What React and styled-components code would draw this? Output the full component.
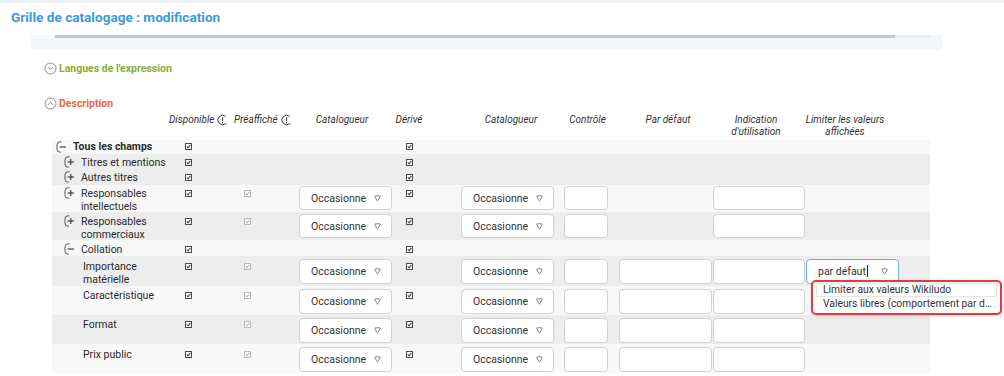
import styled, { createGlobalStyle } from "styled-components";

const GlobalStyle = createGlobalStyle`
  body {
    margin: 0;
    background: #fff;
    font-family: Roboto, "Liberation Sans", sans-serif;
    color: #333;
    overflow: hidden;
  }
`;

// grille de colonnes partagée par l'entête et les lignes
const COLUMNS = "116px 62px 66px 100px 26px 139px 53px 98px 94px 96px 28px";

const TopBand = styled.div`
  height: 3px;
  background: #f0f3f6;
`;

const Title = styled.h1`
  margin: 0;
  height: 32px;
  box-sizing: border-box;
  padding: 7px 11px 0;
  font-size: 13.6px;
  line-height: 14px;
  font-weight: 700;
  color: #3d9ad9;
`;

const Panel = styled.div`
  margin-left: 31px;
  width: 911px;
`;

const ScrollStrip = styled.div`
  height: 15px;
  background: #f4f7fa;
  display: flex;
  align-items: flex-start;
  padding-left: 24px;
`;

const Thumb = styled.div`
  width: 840px;
  height: 3px;
  background: #c6c6c6;
`;

const Track = styled.div`
  width: 35px;
  height: 3px;
  background: #ececec;
`;

const Section = styled.div`
  display: flex;
  align-items: center;
  gap: 2px;
  height: 16px;
  margin-top: ${(p) => p.$mt}px;
  padding-left: 13px;
  font-size: 10.5px;
  font-weight: 700;
  color: ${(p) => p.$color};
`;

const Table = styled.div`
  margin-top: 2px;
  margin-left: 21px;
  width: 878px;
`;

const HeaderRow = styled.div`
  display: grid;
  grid-template-columns: ${COLUMNS};
  height: 27px;
  box-sizing: border-box;
  padding-top: 1px;
  font-size: 10px;
  font-style: italic;
  line-height: 12px;
  color: #333;
`;

const Head = styled.div`
  display: flex;
  justify-content: ${(p) => p.$justify || "center"};
  align-items: flex-start;
  text-align: center;
  white-space: nowrap;
  gap: 3px;
  padding-left: ${(p) => p.$pl || 0}px;
  padding-right: ${(p) => p.$pr || 0}px;
`;

const Row = styled.div`
  display: grid;
  grid-template-columns: ${COLUMNS};
  align-items: start;
  height: ${(p) => p.$h}px;
  background: ${(p) => (p.$dark ? "#ededed" : "#f8f8f8")};
  font-size: 10.5px;
  line-height: 13px;
`;

const Label = styled.div`
  display: flex;
  align-items: flex-start;
  gap: 6px;
  padding-left: ${(p) => p.$indent}px;
  padding-top: ${(p) => p.$pt}px;
  font-weight: ${(p) => (p.$bold ? 700 : 400)};
  color: #2b2b2b;
`;

const IconSlot = styled.span`
  display: flex;
  height: 13px;
  align-items: center;
  flex: none;
`;

const CheckCell = styled.div`
  display: flex;
  justify-content: ${(p) => (p.$center ? "center" : "flex-start")};
  padding-left: ${(p) => p.$pl || 0}px;
  padding-top: ${(p) => p.$pt}px;
  height: 13px;
  align-items: center;
`;

const FieldCell = styled.div`
  position: relative;
  padding-left: ${(p) => p.$pl || 0}px;
  padding-top: ${(p) => p.$pt}px;
`;

const SelectBox = styled.div`
  display: flex;
  align-items: center;
  justify-content: space-between;
  width: 93px;
  height: ${(p) => p.$h}px;
  box-sizing: border-box;
  padding: 0 10px 0 11px;
  background: #fff;
  border: 1px solid ${(p) => (p.$focus ? "#6aaee6" : "#d2d2d2")};
  border-radius: 4px;
  font-size: 10.5px;
  color: #333;
`;

const Caret = styled.span`
  display: inline-block;
  width: 1px;
  height: 12px;
  margin-left: 1px;
  vertical-align: -2px;
  background: #222;
`;

const Input = styled.div`
  width: ${(p) => p.$w}px;
  height: ${(p) => p.$h}px;
  box-sizing: border-box;
  background: #fff;
  border: 1px solid #d2d2d2;
  border-radius: 4px;
`;

const Menu = styled.div`
  position: absolute;
  top: ${(p) => p.$top}px;
  left: 5px;
  width: 191px;
  box-sizing: border-box;
  padding: 1px 3px 2px;
  background: #fff;
  border: 2px solid #e13a3f;
  border-radius: 5px;
  box-shadow: 0 1px 3px rgba(0, 0, 0, 0.15);
  z-index: 2;
`;

const MenuItem = styled.div`
  height: 14px;
  line-height: 12px;
  box-sizing: border-box;
  padding-left: 6px;
  font-size: 10.3px;
  color: #333;
  white-space: nowrap;
  overflow: hidden;
  text-overflow: ellipsis;
  border: 1px solid ${(p) => (p.$active ? "#e6e6e6" : "transparent")};
`;

function CircleChevron({ up }) {
  return (
    <svg width="13" height="13" viewBox="0 0 13 13">
      <circle cx="6.5" cy="6.5" r="5.5" fill="none" stroke="#8c8c8c" strokeWidth="1" />
      <path
        d={up ? "M4.3 7.6 L6.5 5.4 L8.7 7.6" : "M4.3 5.4 L6.5 7.6 L8.7 5.4"}
        fill="none"
        stroke="#8c8c8c"
        strokeWidth="1"
        strokeLinecap="round"
      />
    </svg>
  );
}

function TreeIcon({ open }) {
  return (
    <svg width="11" height="12" viewBox="0 0 11 12">
      <path
        d="M5.5 0.8 H4 A3 3 0 0 0 1 3.8 V8.2 A3 3 0 0 0 4 11.2 H4.8"
        fill="none"
        stroke="#555"
        strokeWidth="1"
      />
      <path d="M3.6 6 H10" stroke="#333" strokeWidth="1.1" />
      {!open && <path d="M6.8 3 V9" stroke="#333" strokeWidth="1.1" />}
    </svg>
  );
}

function InfoIcon() {
  return (
    <svg width="11" height="12" viewBox="0 0 11 12">
      <path
        d="M8.6 2.2 A4.8 4.8 0 1 0 8.6 9.8"
        fill="none"
        stroke="#444"
        strokeWidth="1"
      />
      <path d="M5.5 3.4 V7" stroke="#444" strokeWidth="1.2" />
      <circle cx="5.5" cy="8.8" r="0.7" fill="#444" />
      <path d="M9.6 9.6 L10 10.6" stroke="#444" strokeWidth="0.8" />
    </svg>
  );
}

function Check({ disabled }) {
  const c = disabled ? "#b9b9b9" : "#4a4a4a";
  return (
    <svg width="7" height="7" viewBox="0 0 7 7">
      <rect x="0.5" y="0.5" width="6" height="6" fill="#fff" stroke={c} strokeWidth="1" />
      <path d="M1.8 3.3 L3.1 4.8 L5.4 1.8" fill="none" stroke={c} strokeWidth="1.1" />
    </svg>
  );
}

function Chevron() {
  return (
    <svg width="7" height="7" viewBox="0 0 7 7">
      <path
        d="M1.3 0.8 H5.7 Q6.6 0.8 6.1 1.8 L4 5.6 Q3.5 6.4 3 5.6 L0.9 1.8 Q0.4 0.8 1.3 0.8 Z"
        fill="none"
        stroke="#777"
        strokeWidth="0.9"
      />
    </svg>
  );
}

function Select({ h, focus, children }) {
  return (
    <SelectBox $h={h} $focus={focus}>
      <span>{children}</span>
      <Chevron />
    </SelectBox>
  );
}

// h : hauteur de ligne, pt : décalage du texte, ft : décalage des champs
const rows = [
  { label: "Tous les champs", indent: 4, tree: "open", bold: true, h: 14, pt: 0 },
  { label: "Titres et mentions", indent: 12, tree: "closed", dark: true, h: 16, pt: 1.5 },
  { label: "Autres titres", indent: 12, tree: "closed", dark: true, h: 15, pt: 0.5 },
  { label: "Responsables intellectuels", indent: 12, tree: "closed", field: "short", h: 27, pt: 1.5, ft: 1 },
  { label: "Responsables commerciaux", indent: 12, tree: "closed", field: "short", dark: true, h: 28, pt: 2.5, ft: 2 },
  { label: "Collation", indent: 12, tree: "open", h: 16, pt: 2.5 },
  { label: "Importance matérielle", indent: 31, field: "full", dark: true, limiter: true, h: 30, pt: 3.5, ft: 3 },
  { label: "Caractéristique", indent: 31, field: "full", h: 29, pt: 2.5, ft: 3 },
  { label: "Format", indent: 31, field: "full", dark: true, h: 29, pt: 2.5, ft: 3 },
  { label: "Prix public", indent: 31, field: "full", h: 29, pt: 3.5, ft: 3 },
];

function TableRow({ row }) {
  const full = row.field === "full";
  const fh = full ? 25 : 24;
  const { pt, ft } = row;

  return (
    <Row $h={row.h} $dark={row.dark}>
      <Label $indent={row.indent} $pt={pt} $bold={row.bold}>
        {row.tree && (
          <IconSlot>
            <TreeIcon open={row.tree === "open"} />
          </IconSlot>
        )}
        <span>{row.label}</span>
      </Label>
      <CheckCell $pl={17} $pt={pt}>
        <Check />
      </CheckCell>
      <CheckCell $pl={14} $pt={pt}>
        {row.field && <Check disabled />}
      </CheckCell>
      <FieldCell $pl={3} $pt={ft}>
        {row.field && <Select h={fh}>Occasionne</Select>}
      </FieldCell>
      <CheckCell $center $pt={pt}>
        <Check />
      </CheckCell>
      <FieldCell $pl={39} $pt={ft}>
        {row.field && <Select h={fh}>Occasionne</Select>}
      </FieldCell>
      <FieldCell $pl={3} $pt={ft}>
        {row.field && <Input $w={44} $h={fh} />}
      </FieldCell>
      <FieldCell $pl={5} $pt={ft}>
        {full && <Input $w={93} $h={fh} />}
      </FieldCell>
      <FieldCell $pl={1} $pt={ft}>
        {row.field && <Input $w={92} $h={fh} />}
      </FieldCell>
      <FieldCell $pt={ft}>
        {row.limiter && (
          <>
            <Select h={fh} focus>
              par défaut
              <Caret />
            </Select>
            <Menu $top={ft + 21}>
              <MenuItem $active>Limiter aux valeurs Wikiludo</MenuItem>
              <MenuItem>Valeurs libres (comportement par défaut)</MenuItem>
            </Menu>
          </>
        )}
      </FieldCell>
      <div />
    </Row>
  );
}

export default function App() {
  return (
    <>
      <GlobalStyle />
      <TopBand />
      <Title>Grille de catalogage : modification</Title>
      <Panel>
        <ScrollStrip>
          <Thumb />
          <Track />
        </ScrollStrip>

        <Section $mt={10} $color="#8aae3c">
          <CircleChevron />
          Langues de l'expression
        </Section>
        <Section $mt={19} $color="#e8673f">
          <CircleChevron up />
          Description
        </Section>

        <Table>
          <HeaderRow>
            <div />
            <Head $justify="flex-start" $pl={1}>
              Disponible <InfoIcon />
            </Head>
            <Head $justify="flex-start" $pl={4}>
              Préaffiché <InfoIcon />
            </Head>
            <Head $pr={8}>Catalogueur</Head>
            <Head>Dérivé</Head>
            <Head $pl={39}>Catalogueur</Head>
            <Head>Contrôle</Head>
            <Head $pl={10}>Par défaut</Head>
            <Head $pr={6}>
              Indication
              <br />
              d'utilisation
            </Head>
            <Head $pr={18}>
              Limiter les valeurs
              <br />
              affichées
            </Head>
            <div />
          </HeaderRow>
          {rows.map((row) => (
            <TableRow key={row.label} row={row} />
          ))}
        </Table>
      </Panel>
    </>
  );
}
